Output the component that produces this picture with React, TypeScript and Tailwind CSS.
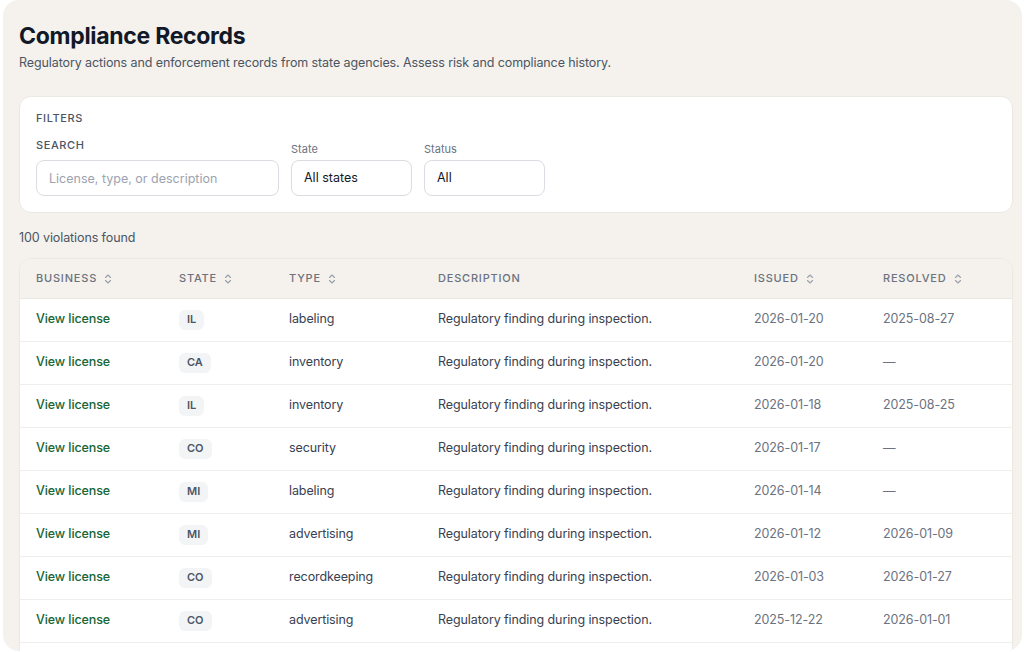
import React from 'react';

interface Violation {
  state: string;
  type: string;
  description: string;
  issued: string;
  resolved: string | null;
}

const violations: Violation[] = [
  { state: 'IL', type: 'labeling', description: 'Regulatory finding during inspection.', issued: '2026-01-20', resolved: '2025-08-27' },
  { state: 'CA', type: 'inventory', description: 'Regulatory finding during inspection.', issued: '2026-01-20', resolved: null },
  { state: 'IL', type: 'inventory', description: 'Regulatory finding during inspection.', issued: '2026-01-18', resolved: '2025-08-25' },
  { state: 'CO', type: 'security', description: 'Regulatory finding during inspection.', issued: '2026-01-17', resolved: null },
  { state: 'MI', type: 'labeling', description: 'Regulatory finding during inspection.', issued: '2026-01-14', resolved: null },
  { state: 'MI', type: 'advertising', description: 'Regulatory finding during inspection.', issued: '2026-01-12', resolved: '2026-01-09' },
  { state: 'CO', type: 'recordkeeping', description: 'Regulatory finding during inspection.', issued: '2026-01-03', resolved: '2026-01-27' },
  { state: 'CO', type: 'advertising', description: 'Regulatory finding during inspection.', issued: '2025-12-22', resolved: '2026-01-01' },
];

const SortIcon = () => (
  <svg width="10" height="12" viewBox="0 0 10 12" fill="none" className="inline-block ml-1.5 -mt-px text-gray-400">
    <path d="M2.5 4.5 5 2l2.5 2.5M2.5 7.5 5 10l2.5-2.5" stroke="currentColor" strokeWidth="1.1" strokeLinecap="round" strokeLinejoin="round" />
  </svg>
);

const columns = [
  { label: 'Business', sortable: true, width: 'w-[143px]' },
  { label: 'State', sortable: true, width: 'w-[110px]' },
  { label: 'Type', sortable: true, width: 'w-[149px]' },
  { label: 'Description', sortable: false, width: 'w-[316px]' },
  { label: 'Issued', sortable: true, width: 'w-[129px]' },
  { label: 'Resolved', sortable: true, width: '' },
];

export default function App() {
  return (
    <div className="bg-white min-h-screen pl-[3px] pr-[2px] font-['Inter',sans-serif]">
      <div className="h-[651px] bg-[#f5f1ec] rounded-2xl overflow-hidden pl-4 pr-[9px] pt-[22px]">
        <h1 className="text-[23px] font-bold text-[#111827] leading-7 tracking-[-0.3px]">Compliance Records</h1>
        <p className="mt-[3px] text-[12.5px] tracking-[-0.1px] text-[#4b5563] leading-5">
          Regulatory actions and enforcement records from state agencies. Assess risk and compliance history.
        </p>

        {/* Filters */}
        <div className="mt-[23px] bg-white rounded-xl border border-[#ebe7e2] px-4 pt-[13px] pb-4">
          <div className="text-[11px] font-medium tracking-[0.6px] text-[#4b5563] leading-4">FILTERS</div>
          <div className="mt-[11px] flex items-end gap-3">
            <div className="flex flex-col">
              <label className="text-[11px] font-medium tracking-[0.6px] text-[#4b5563] leading-4 mb-[7px]">SEARCH</label>
              <input
                className="w-[243px] h-9 rounded-lg border border-[#d9dce1] px-3 text-[12.5px] text-gray-800 placeholder:text-[#9ca3af] outline-none"
                placeholder="License, type, or description"
              />
            </div>
            <div className="flex flex-col">
              <label className="text-[11px] text-[#6b7280] leading-4 mb-[3px]">State</label>
              <div className="w-[121px] h-9 rounded-lg border border-[#d9dce1] px-3 flex items-center text-[12.5px] text-[#111827]">All states</div>
            </div>
            <div className="flex flex-col">
              <label className="text-[11px] text-[#6b7280] leading-4 mb-[3px]">Status</label>
              <div className="w-[121px] h-9 rounded-lg border border-[#d9dce1] px-3 flex items-center text-[12.5px] text-[#111827]">All</div>
            </div>
          </div>
        </div>

        <div className="mt-[15px] text-[12.5px] tracking-[-0.1px] text-[#4b5563] leading-5">100 violations found</div>

        {/* Table - continues below the fold */}
        <div className="mt-[10px] h-[420px] bg-white rounded-xl border border-[#ebe7e2] overflow-hidden">
          <table className="w-full border-collapse table-fixed">
            <thead>
              <tr className="bg-[#f5f1ec] h-[39px] border-b border-[#ebe7e2]">
                {columns.map(col => (
                  <th
                    key={col.label}
                    className={`${col.width} pl-4 text-left text-[11px] font-medium uppercase tracking-[0.8px] text-[#6b7280]`}
                  >
                    {col.label}
                    {col.sortable && <SortIcon />}
                  </th>
                ))}
              </tr>
            </thead>
            <tbody>
              {violations.map((v, i) => (
                <tr key={i} className="h-[43px] border-b border-[#f0eeeb] text-[12.5px] tracking-[-0.1px]">
                  <td className="pl-4 font-medium text-[#166534]">View license</td>
                  <td className="pl-4">
                    <span className="inline-flex items-center h-5 px-2 rounded-md bg-[#f3f4f6] text-[11px] font-semibold tracking-normal text-[#4b5563]">{v.state}</span>
                  </td>
                  <td className="pl-4 text-[#374151]">{v.type}</td>
                  <td className="pl-4 text-[#374151]">{v.description}</td>
                  <td className="pl-4 text-[#6b7280]">{v.issued}</td>
                  <td className="pl-4 text-[#6b7280]">{v.resolved ?? '—'}</td>
                </tr>
              ))}
            </tbody>
          </table>
        </div>
      </div>
    </div>
  );
}
